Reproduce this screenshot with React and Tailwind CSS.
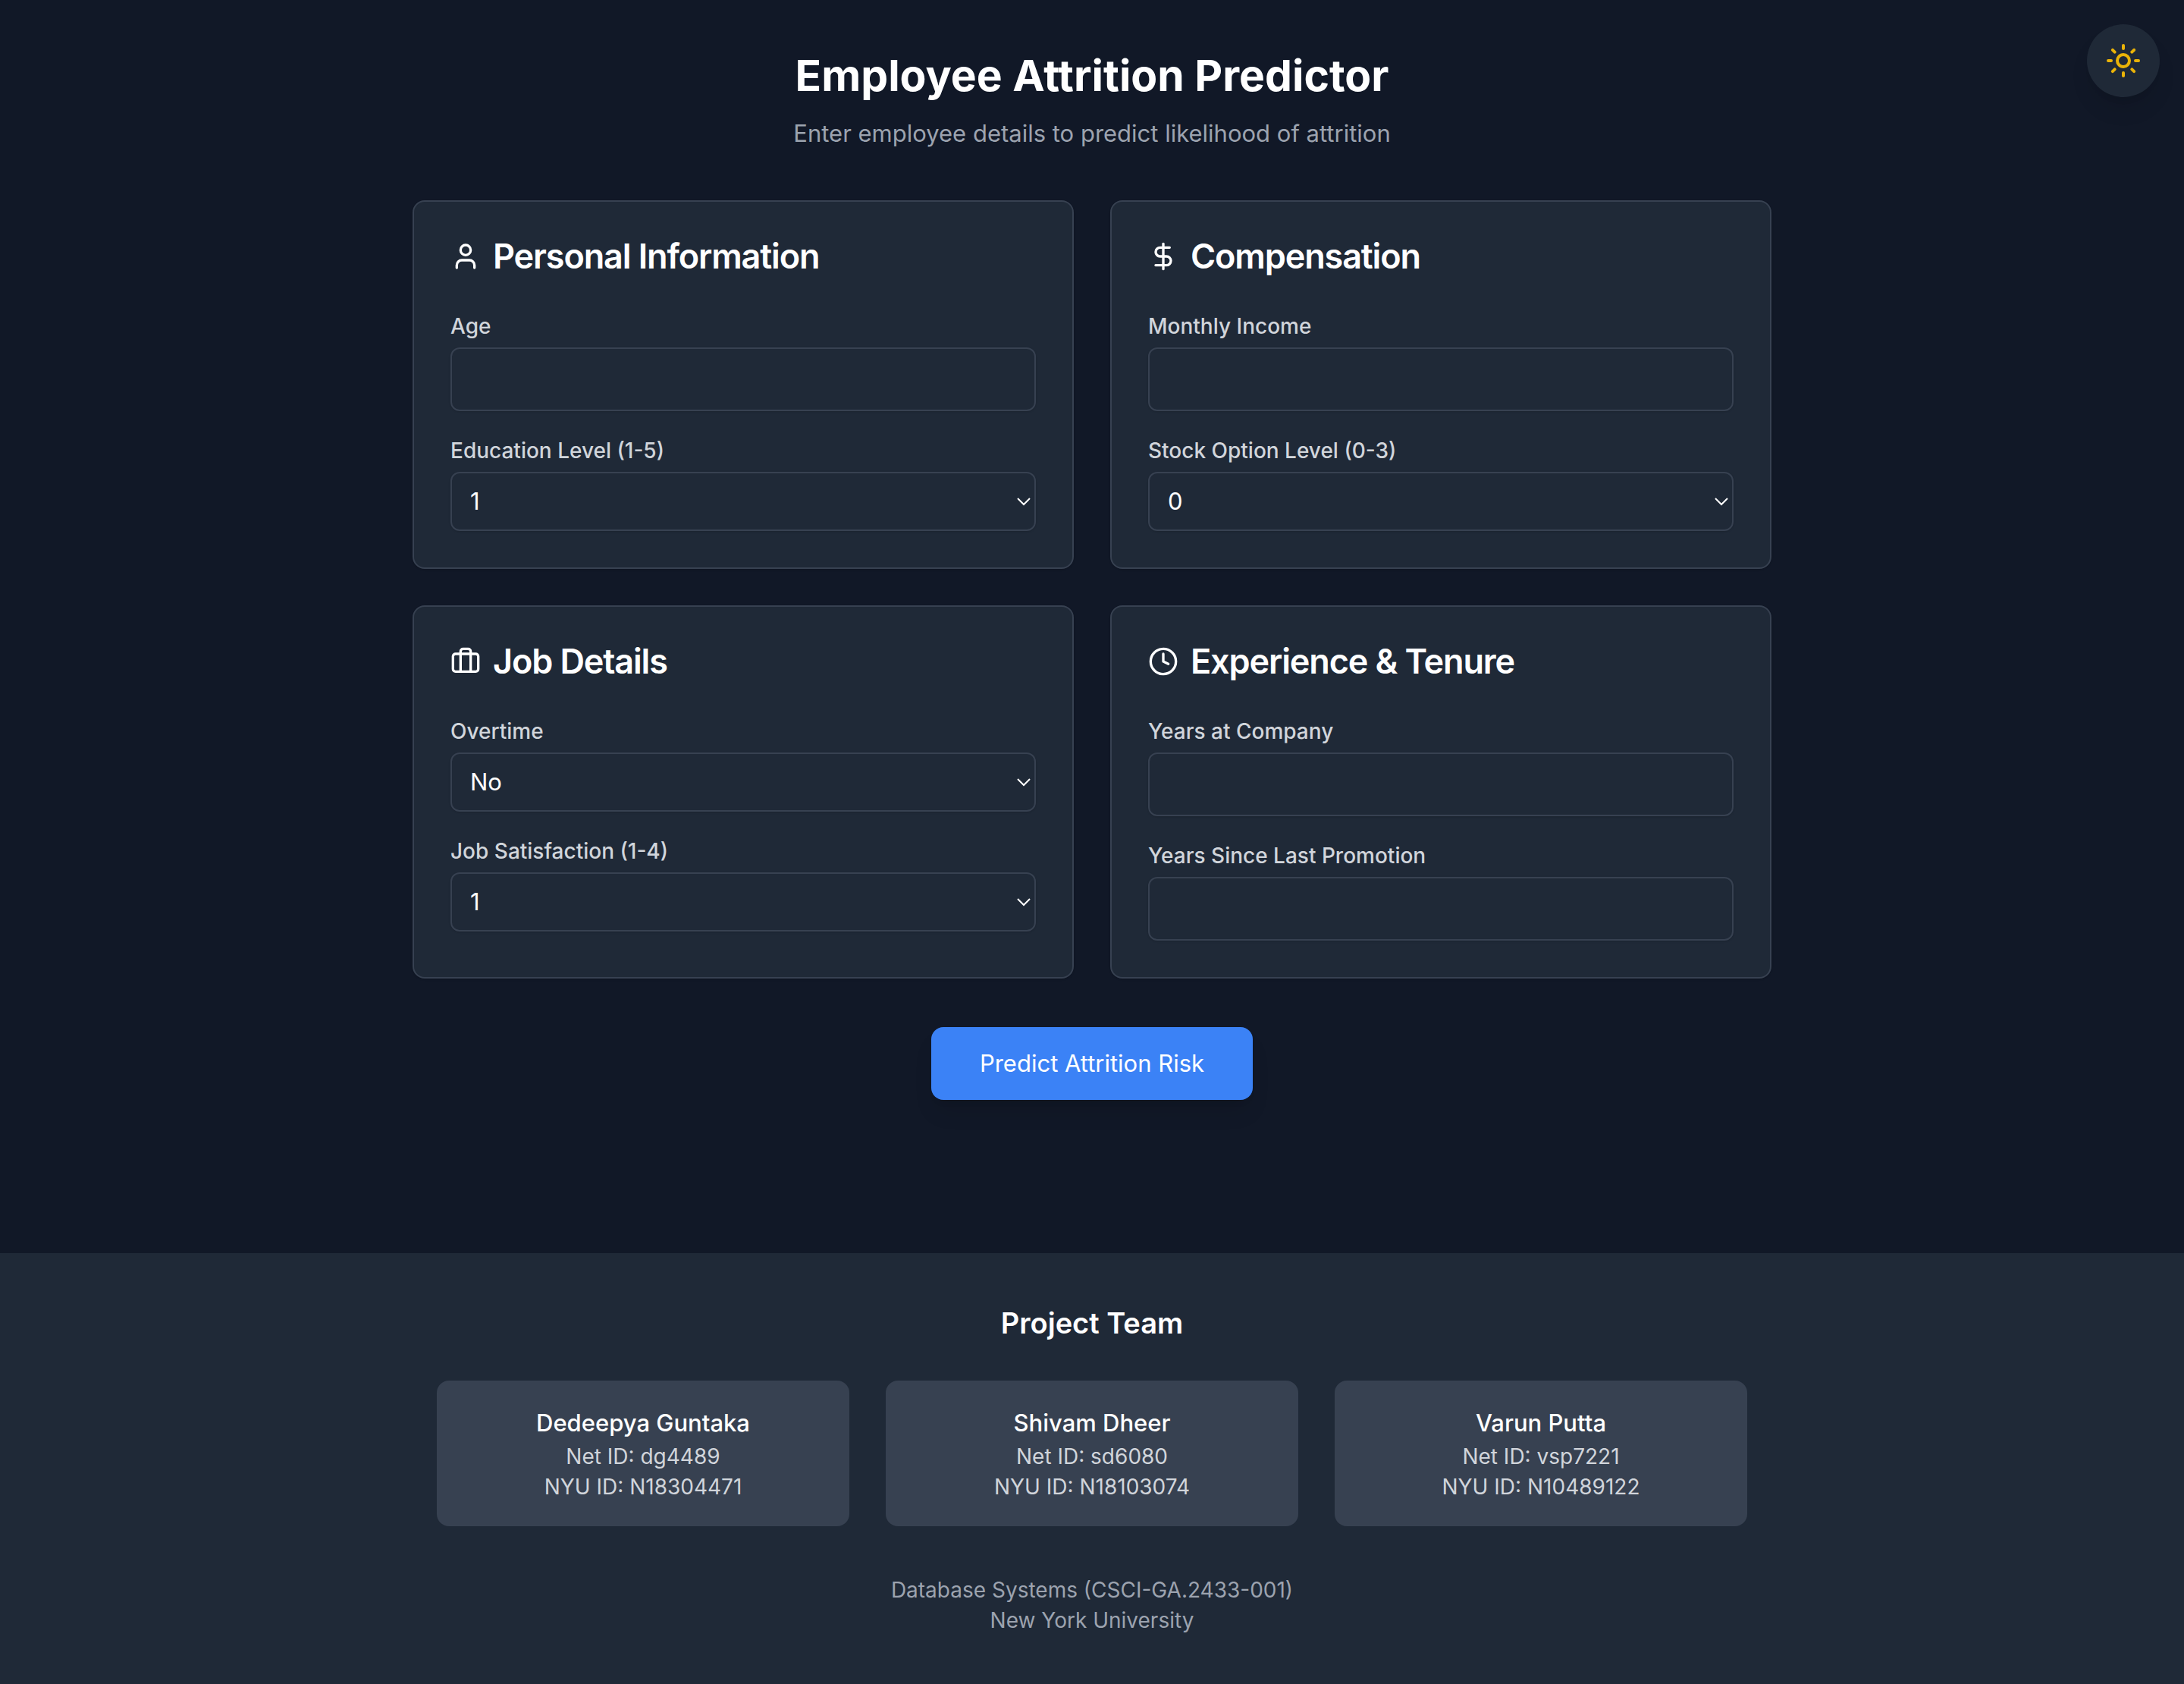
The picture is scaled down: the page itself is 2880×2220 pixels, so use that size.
import { useId } from "react";
import { Briefcase, Clock, DollarSign, Sun, User } from "lucide-react";

const FONT = "font-['Inter','Liberation_Sans',sans-serif]";

const TEAM = [
  { name: "Dedeepya Guntaka", netId: "dg4489", nyuId: "N18304471" },
  { name: "Shivam Dheer", netId: "sd6080", nyuId: "N18103074" },
  { name: "Varun Putta", netId: "vsp7221", nyuId: "N10489122" },
];

function Card({ icon: Icon, title, children }) {
  return (
    <section className="rounded-2xl border-2 border-[#374151] bg-[#1f2937] p-12 shadow-sm">
      <h2 className="mb-12 flex items-center gap-4 text-[45px] leading-12 font-semibold tracking-tight text-white">
        <Icon className="size-10 shrink-0" aria-hidden="true" />
        {title}
      </h2>
      <div className="flex flex-col gap-8">{children}</div>
    </section>
  );
}

function Label({ htmlFor, children }) {
  return (
    <label htmlFor={htmlFor} className="text-[28px] leading-10 font-medium text-[#d1d5db]">
      {children}
    </label>
  );
}

function NumberField({ label }) {
  const id = useId();
  return (
    <div className="flex flex-col gap-2">
      <Label htmlFor={id}>{label}</Label>
      <input
        id={id}
        type="number"
        className="h-21 w-full rounded-xl border-2 border-[#374151] bg-[#1f2937] px-6 text-[31px] leading-10 text-white shadow-sm"
      />
    </div>
  );
}

function SelectField({ label, options }) {
  const id = useId();
  return (
    <div className="flex flex-col gap-2">
      <Label htmlFor={id}>{label}</Label>
      <div className="relative">
        <select
          id={id}
          className="block h-[78px] w-full appearance-none rounded-xl border-2 border-[#374151] bg-[#1f2937] px-6 text-[31px] leading-10 text-white shadow-sm"
        >
          {options.map((option) => (
            <option key={option}>{option}</option>
          ))}
        </select>
        <svg
          className="pointer-events-none absolute inset-y-0 right-1.5 my-auto h-3 w-5"
          viewBox="0 0 20 12"
          fill="none"
          stroke="white"
          strokeWidth="2"
          aria-hidden="true"
        >
          <path d="M2 2l8 8 8-8" />
        </svg>
      </div>
    </div>
  );
}

export default function App() {
  return (
    <div className={`${FONT} relative flex min-h-screen flex-col bg-[#111827] text-white`}>
      <button
        type="button"
        aria-label="Toggle theme"
        className="absolute top-8 right-8 rounded-full bg-[#1f2937] p-6 text-[#eab308] shadow-[0_20px_30px_-6px_rgba(0,0,0,0.1),0_8px_12px_-8px_rgba(0,0,0,0.1)]"
      >
        <Sun className="size-12" aria-hidden="true" />
      </button>

      <main className="mx-auto w-full max-w-[1792px] flex-1 py-16">
        <header className="mb-16 flex flex-col gap-4 text-center">
          <h1 className="text-[57px] leading-[72px] font-bold">Employee Attrition Predictor</h1>
          <p className="text-[31px] leading-12 text-[#9ca3af]">
            Enter employee details to predict likelihood of attrition
          </p>
        </header>

        <form className="flex flex-col items-center gap-16" onSubmit={(e) => e.preventDefault()}>
          <div className="grid w-full gap-12 md:grid-cols-2">
            <Card icon={User} title="Personal Information">
              <NumberField label="Age" />
              <SelectField label="Education Level (1-5)" options={[1, 2, 3, 4, 5]} />
            </Card>
            <Card icon={DollarSign} title="Compensation">
              <NumberField label="Monthly Income" />
              <SelectField label="Stock Option Level (0-3)" options={[0, 1, 2, 3]} />
            </Card>
            <Card icon={Briefcase} title="Job Details">
              <SelectField label="Overtime" options={["No", "Yes"]} />
              <SelectField label="Job Satisfaction (1-4)" options={[1, 2, 3, 4]} />
            </Card>
            <Card icon={Clock} title="Experience & Tenure">
              <NumberField label="Years at Company" />
              <NumberField label="Years Since Last Promotion" />
            </Card>
          </div>
          <button
            type="submit"
            className="rounded-2xl bg-[#3b82f6] px-16 py-6 text-[31px] leading-12 text-white shadow-[0_20px_30px_-6px_rgba(0,0,0,0.1),0_8px_12px_-8px_rgba(0,0,0,0.1)]"
          >
            Predict Attrition Risk
          </button>
        </form>
      </main>

      <footer className="bg-[#1f2937] py-16">
        <div className="mx-auto max-w-[1792px] px-8 text-center">
          <h2 className="mb-12 text-[38px] leading-14 font-semibold">Project Team</h2>
          <ul className="grid gap-12 md:grid-cols-3">
            {TEAM.map((member) => (
              <li key={member.name} className="rounded-2xl bg-[#374151] p-8 text-[28px] leading-10 text-[#d1d5db]">
                <h3 className="text-[31px] leading-12 font-medium text-white">{member.name}</h3>
                <p>Net ID: {member.netId}</p>
                <p>NYU ID: {member.nyuId}</p>
              </li>
            ))}
          </ul>
          <div className="mt-16 text-[28px] leading-10 text-[#9ca3af]">
            <p>Database Systems (CSCI-GA.2433-001)</p>
            <p>New York University</p>
          </div>
        </div>
      </footer>
    </div>
  );
}
